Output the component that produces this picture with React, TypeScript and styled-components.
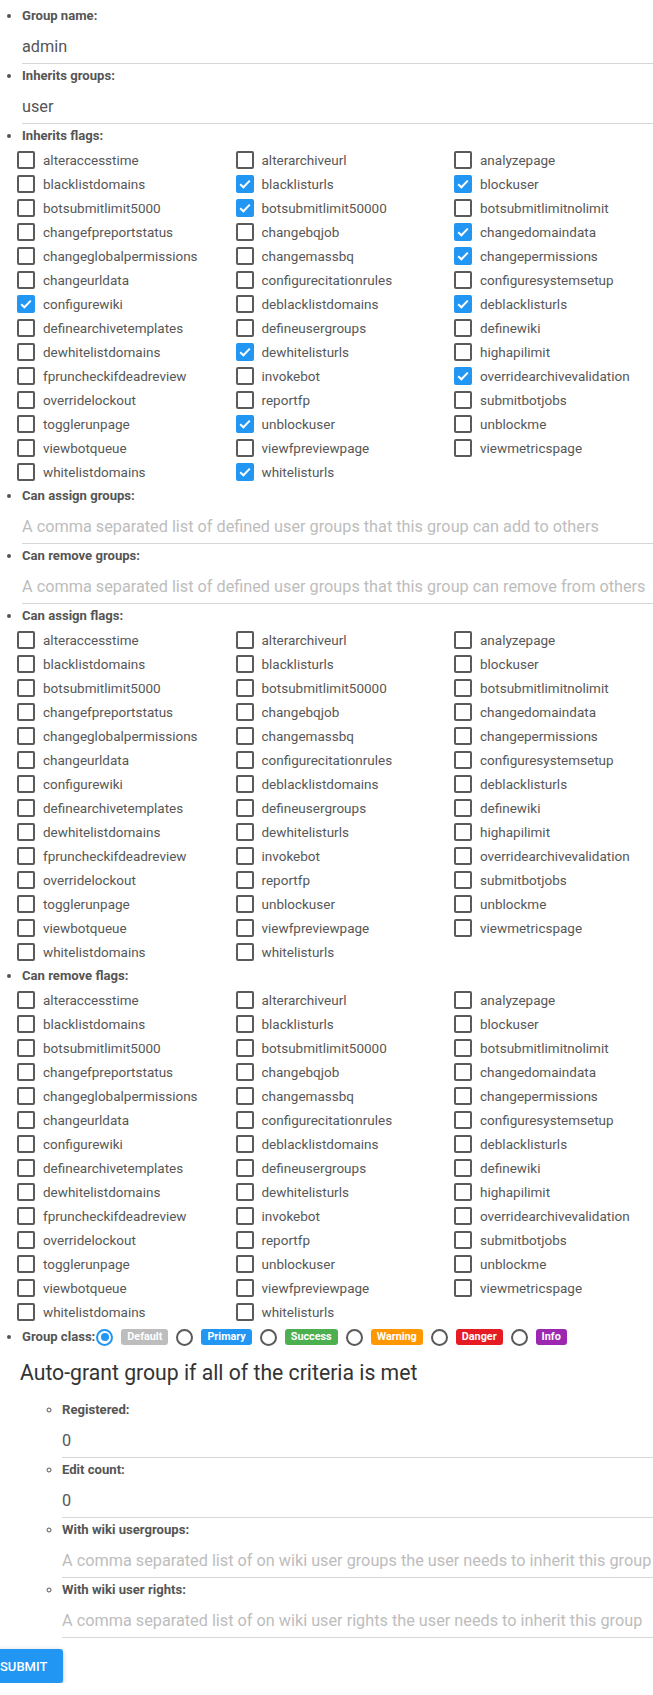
import React from 'react'
import styled, { createGlobalStyle } from 'styled-components'

const FLAGS = [
  'alteraccesstime', 'alterarchiveurl', 'analyzepage',
  'blacklistdomains', 'blacklisturls', 'blockuser',
  'botsubmitlimit5000', 'botsubmitlimit50000', 'botsubmitlimitnolimit',
  'changefpreportstatus', 'changebqjob', 'changedomaindata',
  'changeglobalpermissions', 'changemassbq', 'changepermissions',
  'changeurldata', 'configurecitationrules', 'configuresystemsetup',
  'configurewiki', 'deblacklistdomains', 'deblacklisturls',
  'definearchivetemplates', 'defineusergroups', 'definewiki',
  'dewhitelistdomains', 'dewhitelisturls', 'highapilimit',
  'fpruncheckifdeadreview', 'invokebot', 'overridearchivevalidation',
  'overridelockout', 'reportfp', 'submitbotjobs',
  'togglerunpage', 'unblockuser', 'unblockme',
  'viewbotqueue', 'viewfpreviewpage', 'viewmetricspage',
  'whitelistdomains', 'whitelisturls'
]

const INHERITED = [
  'blacklisturls', 'blockuser', 'botsubmitlimit50000', 'changedomaindata',
  'changepermissions', 'configurewiki', 'deblacklisturls', 'dewhitelisturls',
  'overridearchivevalidation', 'unblockuser', 'whitelisturls'
]

const CLASSES = [
  { name: 'Default', color: '#bdbdbd' },
  { name: 'Primary', color: '#2196f3' },
  { name: 'Success', color: '#4caf50' },
  { name: 'Warning', color: '#ff9800' },
  { name: 'Danger', color: '#e51c23' },
  { name: 'Info', color: '#9c27b0' }
]

const GlobalStyle = createGlobalStyle`
  html, body {
    margin: 0;
    overflow: hidden;
    background: #fff;
  }
  body {
    font-family: Roboto, 'Noto Sans', Arial, sans-serif;
    color: #555;
  }
`

const Form = styled.form`
  display: flex;
  flex-direction: column;
  align-items: flex-start;
  padding-top: 6px;
`

const FieldList = styled.ul<{ $nested?: boolean }>`
  margin: 0;
  padding: 0 0 0 ${({ $nested }) => ($nested ? '62px' : '22px')};
  list-style: ${({ $nested }) => ($nested ? 'circle' : 'disc')};
  align-self: stretch;
  font-size: 13.5px;
  color: #555;
`

const Field = styled.li`
  margin: 0 0 2px;
`

const PlainItem = styled.li`
  list-style: none;
`

const FieldLabel = styled.label`
  display: block;
  height: 20px;
  line-height: 20px;
  font-weight: 700;
  font-size: 13.1px;
  color: #555;
`

const TextInput = styled.input`
  display: block;
  box-sizing: border-box;
  width: 100%;
  height: 38px;
  margin: 0;
  padding: 4px 0 0;
  border: none;
  border-bottom: 1px solid #d6d6d6;
  outline: none;
  background: transparent;
  font-family: inherit;
  font-size: 16.25px;
  color: #555;
  &::placeholder {
    color: #bdbdbd;
  }
`

const FlagGrid = styled.div`
  display: grid;
  grid-template-columns: repeat(3, 218.5px);
  grid-auto-rows: 24px;
  margin: 2px 0 0 -5px;
`

const FlagOption = styled.label`
  display: flex;
  align-items: center;
  gap: 8px;
  font-size: 13.5px;
  color: #575757;
  white-space: nowrap;
  cursor: pointer;
`

const HiddenInput = styled.input`
  position: absolute;
  opacity: 0;
  pointer-events: none;
`

const Box = styled.span`
  position: relative;
  box-sizing: border-box;
  width: 18px;
  height: 18px;
  flex: none;
  border: 2px solid #5a5a5a;
  border-radius: 2px;
  svg {
    display: none;
    position: absolute;
    left: -2px;
    top: -2px;
  }
  input:checked + & {
    background: #2196f3;
    border-color: #2196f3;
  }
  input:checked + & svg {
    display: block;
  }
`

const ClassRow = styled.div`
  display: flex;
  align-items: center;
  height: 22px;
`

const ClassChoice = styled.label`
  display: flex;
  align-items: center;
  gap: 8px;
  margin-left: 8px;
  cursor: pointer;
  &:first-of-type {
    margin-left: 1px;
  }
`

const RadioDot = styled.span`
  position: relative;
  box-sizing: border-box;
  width: 17px;
  height: 17px;
  border: 2px solid #5a5a5a;
  border-radius: 50%;
  input:checked + & {
    border-color: #2196f3;
  }
  input:checked + &::after {
    content: '';
    position: absolute;
    left: 2.5px;
    top: 2.5px;
    width: 8px;
    height: 8px;
    border-radius: 50%;
    background: #2196f3;
  }
`

const Badge = styled.span<{ $color: string }>`
  display: inline-block;
  height: 16px;
  line-height: 16px;
  padding: 0 6px;
  border-radius: 3px;
  background: ${({ $color }) => $color};
  color: #fff;
  font-size: 10.8px;
  font-weight: 700;
`

const SectionTitle = styled.h5`
  margin: 10px 0 12px -2px;
  height: 30px;
  line-height: 30px;
  font-size: 21.2px;
  font-weight: 400;
  color: #333;
`

const SubmitButton = styled.button`
  height: 34px;
  margin: 9px 0 0 -16px;
  padding: 0 16px;
  border: none;
  border-radius: 3px;
  background: #2196f3;
  color: #fff;
  font-family: inherit;
  font-size: 13px;
  font-weight: 500;
  text-transform: uppercase;
  box-shadow: 0 2px 2px 0 rgba(0, 0, 0, 0.14), 0 3px 1px -2px rgba(0, 0, 0, 0.12), 0 1px 5px 0 rgba(0, 0, 0, 0.2);
  cursor: pointer;
`

function CheckMark() {
  return (
    <svg width="18" height="18" viewBox="0 0 18 18">
      <path d="M4.2 9.2 L7.4 12.3 L13.8 5.6" fill="none" stroke="#fff" strokeWidth="2" />
    </svg>
  )
}

function FlagList({ name, checked = [] }: { name: string; checked?: string[] }) {
  return (
    <FlagGrid>
      {FLAGS.map(flag => (
        <FlagOption key={flag}>
          <HiddenInput type="checkbox" name={`${name}[]`} value={flag} defaultChecked={checked.includes(flag)} />
          <Box>
            <CheckMark />
          </Box>
          {flag}
        </FlagOption>
      ))}
    </FlagGrid>
  )
}

function TextField({ label, value, placeholder }: { label: string; value?: string; placeholder?: string }) {
  return (
    <Field>
      <FieldLabel>{label}</FieldLabel>
      <TextInput type="text" defaultValue={value} placeholder={placeholder} />
    </Field>
  )
}

export default function App() {
  return (
    <>
      <GlobalStyle />
      <Form onSubmit={e => e.preventDefault()}>
        <FieldList>
          <TextField label="Group name:" value="admin" />
          <TextField label="Inherits groups:" value="user" />
          <Field>
            <FieldLabel>Inherits flags:</FieldLabel>
            <FlagList name="inheritsflags" checked={INHERITED} />
          </Field>
          <TextField
            label="Can assign groups:"
            placeholder="A comma separated list of defined user groups that this group can add to others"
          />
          <TextField
            label="Can remove groups:"
            placeholder="A comma separated list of defined user groups that this group can remove from others"
          />
          <Field>
            <FieldLabel>Can assign flags:</FieldLabel>
            <FlagList name="assignflags" />
          </Field>
          <Field>
            <FieldLabel>Can remove flags:</FieldLabel>
            <FlagList name="removeflags" />
          </Field>
          <Field>
            <ClassRow>
              <FieldLabel as="span">Group class:</FieldLabel>
              {CLASSES.map((c, i) => (
                <ClassChoice key={c.name}>
                  <HiddenInput type="radio" name="groupclass" value={c.name.toLowerCase()} defaultChecked={i === 0} />
                  <RadioDot />
                  <Badge $color={c.color}>{c.name}</Badge>
                </ClassChoice>
              ))}
            </ClassRow>
          </Field>
          <PlainItem>
            <SectionTitle>Auto-grant group if all of the criteria is met</SectionTitle>
          </PlainItem>
        </FieldList>
        <FieldList $nested>
          <TextField label="Registered:" value="0" />
          <TextField label="Edit count:" value="0" />
          <TextField
            label="With wiki usergroups:"
            placeholder="A comma separated list of on wiki user groups the user needs to inherit this group"
          />
          <TextField
            label="With wiki user rights:"
            placeholder="A comma separated list of on wiki user rights the user needs to inherit this group"
          />
        </FieldList>
        <SubmitButton type="submit">Submit</SubmitButton>
      </Form>
    </>
  )
}
